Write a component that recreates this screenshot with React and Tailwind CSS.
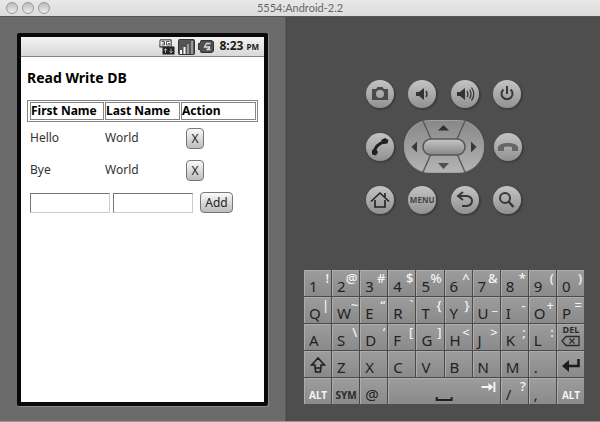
import React from "react";

const people = [
  { first: "Hello", last: "World" },
  { first: "Bye", last: "World" },
];

const keyRows = [
  [["1", "!"], ["2", "@"], ["3", "#"], ["4", "$"], ["5", "%"], ["6", "^"], ["7", "&"], ["8", "*"], ["9", "("], ["0", ")"]],
  [["Q", "|"], ["W", "~"], ["E", "“"], ["R", "`"], ["T", "{"], ["Y", "}"], ["U", "_"], ["I", "-"], ["O", "+"], ["P", "="]],
  [["A", ""], ["S", "\\"], ["D", "‘"], ["F", "["], ["G", "]"], ["H", "<"], ["J", ">"], ["K", ";"], ["L", ":"]],
];

const keyStyle =
  "flex h-[26px] min-w-0 overflow-hidden border-t border-l border-[#adadad] bg-linear-to-b from-[#9c9c9c] to-[#8a8a8a]";

function Key({ label, alt }) {
  return (
    <button type="button" className={`${keyStyle} justify-between pr-0.5 pl-1`}>
      <span className="self-end text-[15px] leading-[20px] text-[#222]">{label}</span>
      <span className="text-[13px] leading-[15px] font-medium text-[#f4f4f4]">{alt}</span>
    </button>
  );
}

function IconKey({ label, wide, children }) {
  return (
    <button
      type="button"
      aria-label={label}
      className={`${keyStyle} items-center justify-center ${wide ? "col-span-4" : ""}`}
    >
      {children}
    </button>
  );
}

function WordKey({ children, light }) {
  return (
    <button
      type="button"
      className={`${keyStyle} items-end justify-center pb-0.5 text-[10px] leading-[14px] font-bold ${light ? "text-[#f4f4f4]" : "text-[#2b2b2b]"}`}
    >
      {children}
    </button>
  );
}

function RoundButton({ label, children }) {
  return (
    <button
      type="button"
      aria-label={label}
      className="flex size-7 items-center justify-center rounded-full bg-linear-to-b from-[#c4c4c4] to-[#919191] shadow-[1px_1px_1px_1px_#3e3e3e]"
    >
      {children}
    </button>
  );
}

function Icon({ children }) {
  return (
    <svg viewBox="0 0 28 28" className="size-7" fill="none" stroke="#383838" strokeWidth="2">
      {children}
    </svg>
  );
}

function TitleBar() {
  const lights = ["Close", "Minimize", "Zoom"];
  return (
    <header className="flex h-4 items-center bg-linear-to-b from-[#e8e8e8] to-[#dcdcdc] px-1.5">
      <div className="flex flex-1 gap-1">
        {lights.map((name) => (
          <button
            key={name}
            type="button"
            aria-label={name}
            className="size-3 rounded-full border border-[#989898] bg-linear-to-b from-[#bcbcbc] to-[#ececec]"
          />
        ))}
      </div>
      <h1 className="font-['Lato','Open_Sans',sans-serif] text-[11px] leading-4 text-[#666]">5554:Android-2.2</h1>
      <div className="flex-1" />
    </header>
  );
}

function StatusBar() {
  return (
    <div className="flex h-5 items-center justify-end gap-[3px] border-b border-[#858585] bg-linear-to-b from-[#f2f2f2] to-[#d8d8d8] pr-[5px]">
      <svg viewBox="0 0 16 16" className="h-4 w-4" role="img" aria-label="3G">
        <path d="M1 .5h11.500v7H15.500v8H3.500v-7H.5z" fill="#222" />
        <path d="M1 1h11v6.500H1z" fill="#fafafa" stroke="#555" />
        <path d="M2.500 2.500H5.500v3.500H2.500M3.500 4.300h2M10.500 2.500H7.500V6h3V4.500H9" fill="none" stroke="#555" />
        <path d="M6.500 14v-4M5 11.500l1.500-2 1.500 2M12 9.500v4M10.500 12l1.500 2 1.500-2" fill="none" stroke="#aaa" />
      </svg>
      <svg viewBox="0 0 17 16" className="h-4 w-[17px]" role="img" aria-label="Signal">
        <rect x="0.500" y="0.500" width="16" height="15" rx="1" fill="#555" stroke="#333" />
        <path d="M2 11h2v4H2zM5.500 8h2v7h-2z" fill="#f6f6f6" />
        <path d="M9 5h2v10H9zM13 2h2v13h-2z" fill="#999" />
      </svg>
      <svg viewBox="0 0 16 13" className="mr-0.5 h-[13px] w-4" role="img" aria-label="Battery charging">
        <path d="M3 .5h11l1.500 1.500v9L14 12.500H3L2 9.500H.5v-6H2z" fill="#505050" stroke="#333" />
        <path d="M12.500 3.500H8.500L6.500 7H12M12 7l-3 3M8.500 9.500h4" fill="none" stroke="#ddd" strokeWidth="1.300" />
      </svg>
      <time className="text-[12px] leading-5 font-bold text-[#1a1a1a]">
        8:23 <span className="text-[8px]">PM</span>
      </time>
    </div>
  );
}

const smallButton =
  "h-[21px] rounded-[4px] border border-[#777] bg-linear-to-b from-[#fafafa] to-[#bdbdbd] text-[12px] leading-[19px] text-[#222]";
const textField = "h-5 w-20 border border-t-[#777] border-r-[#ccc] border-b-[#ccc] border-l-[#777] bg-white px-1 text-[12px]";
const headingBox = "h-[18px] border border-[#858585] leading-4 text-black";

function AppScreen() {
  return (
    <main className="flex-1 px-1.5 text-[12px] text-[#333]">
      <h2 className="mt-[11px] text-[14px] leading-5 font-bold text-black">Read Write DB</h2>
      <table className="mt-3 w-[231px] table-fixed border-separate border-spacing-0 text-left">
        <thead>
          <tr className="outline outline-[#858585] -outline-offset-1">
            <th className="h-[22px] w-[77px] p-0.5 pr-0"><div className={`${headingBox} ml-px`}>First Name</div></th>
            <th className="h-[22px] w-[76px] p-0.5 pr-0 pl-px"><div className={headingBox}>Last Name</div></th>
            <th className="h-[22px] p-0.5 pl-px"><div className={headingBox}>Action</div></th>
          </tr>
        </thead>
        <tbody>
          {people.map((person) => (
            <tr key={person.first}>
              <td className="h-8 p-0 pl-[3px]">{person.first}</td>
              <td className="h-8 p-0 pl-px">{person.last}</td>
              <td className="h-8 p-0 pl-1.5 align-middle">
                <button type="button" aria-label={`Delete ${person.first}`} className={`${smallButton} block w-[18px]`}>X</button>
              </td>
            </tr>
          ))}
        </tbody>
      </table>
      <form className="mt-1.5 flex items-center pl-[3px]" onSubmit={(e) => e.preventDefault()}>
        <input aria-label="First Name" className={textField} />
        <input aria-label="Last Name" className={`${textField} ml-[3px]`} />
        <button type="submit" className={`${smallButton} ml-[7px] w-[33px]`}>Add</button>
      </form>
    </main>
  );
}

function DirectionPad() {
  return (
    <div role="group" aria-label="Direction pad" className="flex h-[54px] w-20 items-center justify-center">
      <svg viewBox="0 0 80 54" className="h-[54px] w-20" aria-hidden="true">
        <defs>
          <linearGradient id="padFill" x1="0" y1="0" x2="0" y2="1">
            <stop offset="0" stopColor="#888" />
            <stop offset="1" stopColor="#b4b4b4" />
          </linearGradient>
          <linearGradient id="centerFill" x1="0" y1="0" x2="0" y2="1">
            <stop offset="0" stopColor="#c6c6c6" />
            <stop offset="1" stopColor="#868686" />
          </linearGradient>
        </defs>
        <rect x="0.500" y="0.500" width="79" height="52" rx="25" fill="url(#padFill)" stroke="#a2a2a2" />
        <path d="M19 1l8 18M61 1l-8 18M27 34l-8 18M53 34l8 18" stroke="#555" strokeWidth="1.300" />
        <rect x="19" y="19" width="42" height="16" rx="8" fill="url(#centerFill)" stroke="#555" strokeWidth="1.500" />
        <path d="M34 10.500L39.500 5l5.500 5.500z" fill="#303030" />
        <path d="M34 43l5.500 6 5.500-6z" fill="#505050" />
        <path d="M13 21.500v11L7.500 27z" fill="#383838" />
        <path d="M67 21.500v11l5.500-5.500z" fill="#383838" />
      </svg>
    </div>
  );
}

function Controls() {
  return (
    <section aria-label="Device controls" className="mx-auto flex w-[156px] flex-col">
      <div className="flex justify-between">
        <RoundButton label="Camera">
          <Icon>
            <path fillRule="evenodd" d="M6 9h4l1.500-2h5L18 9h4v11H6zM14 10a4 4 0 1 0 0 8 4 4 0 0 0 0-8z" fill="#4a4a4a" stroke="none" />
          </Icon>
        </RoundButton>
        <RoundButton label="Volume down">
          <Icon>
            <path d="M8 12h3l5-4v12l-5-4H8z" fill="#333" stroke="none" />
            <path d="M18 11q2 3 0 6" strokeWidth="1.500" />
          </Icon>
        </RoundButton>
        <RoundButton label="Volume up">
          <Icon>
            <path d="M6 12h3l5-4v12l-5-4H6z" fill="#333" stroke="none" />
            <path d="M16 11q2 3 0 6M18.500 9.500q3 4.500 0 9M20.500 7.500q4.500 6.500 0 13" strokeWidth="1.300" />
          </Icon>
        </RoundButton>
        <RoundButton label="Power">
          <Icon>
            <path d="M10.500 9.500a5.500 5.500 0 1 0 7 0M14 6v8" />
          </Icon>
        </RoundButton>
      </div>
      <div className="mt-3 flex items-center justify-between">
        <RoundButton label="Call">
          <Icon>
            <path d="M8.500 20Q8 12 19 8.500" strokeWidth="3" stroke="#222" />
            <path d="M15 7l4-2 3.500 2-1 3.500-4 .5zM6 17l4-1 2 3-2 3.500-4-1z" fill="#222" stroke="none" />
          </Icon>
        </RoundButton>
        <DirectionPad />
        <RoundButton label="End call">
          <Icon>
            <path d="M4 18v-4q2-4 10-4t10 4v4h-6v-4q-4-1-8 0v4z" fill="#666" stroke="none" />
          </Icon>
        </RoundButton>
      </div>
      <div className="mt-3 flex justify-between">
        <RoundButton label="Home">
          <Icon>
            <path d="M5 15.500L14 7l9 8.500M9 14v7h10v-7M19 7v4" strokeWidth="1.600" stroke="#222" />
          </Icon>
        </RoundButton>
        <RoundButton label="Menu">
          <span className="text-[8px] leading-none font-bold text-[#444]">MENU</span>
        </RoundButton>
        <RoundButton label="Back">
          <Icon>
            <path d="M12 6l-5 4 5 4M8 10h8q5 1 5 5t-5 5h-5" />
          </Icon>
        </RoundButton>
        <RoundButton label="Search">
          <Icon>
            <circle cx="12" cy="12" r="5" />
            <path d="M15.500 15.500l5 5.500" strokeWidth="2.500" />
          </Icon>
        </RoundButton>
      </div>
    </section>
  );
}

function Keyboard() {
  return (
    <section aria-label="Keyboard" className="mr-4 ml-auto grid w-[280px] grid-cols-10 gap-px bg-[#4a4a4a]">
      {keyRows.flat().map(([label, alt]) => (
        <Key key={label} label={label} alt={alt} />
      ))}
      <button type="button" className={`${keyStyle} flex-col items-center text-[9px] leading-[9px] font-bold text-[#2b2b2b]`}>
        DEL
        <svg viewBox="0 0 20 12" className="mt-px h-3 w-5" fill="none" stroke="#2b2b2b" aria-hidden="true">
          <path d="M1 6l4-4.500h13v9H5zM8.500 3.500l5 5M13.500 3.500l-5 5" strokeWidth="1.300" />
        </svg>
      </button>
      <IconKey label="Shift">
        <svg viewBox="0 0 16 18" className="h-[18px] w-4" fill="none" stroke="#202020" strokeWidth="1.600">
          <path d="M8 2L1.500 9H5v3h6V9h3.500zM5.500 12v4h5v-4" />
        </svg>
      </IconKey>
      {["Z", "X", "C", "V", "B", "N", "M", "."].map((label) => (
        <Key key={label} label={label} alt="" />
      ))}
      <IconKey label="Enter">
        <svg viewBox="0 0 20 16" className="h-4 w-5" fill="none" stroke="#1c1c1c" strokeWidth="2.500">
          <path d="M17.500 2v7H5" />
          <path d="M8 3L1 9l7 6z" fill="#1c1c1c" stroke="none" />
        </svg>
      </IconKey>
      <WordKey light>ALT</WordKey>
      <WordKey>SYM</WordKey>
      <Key label="@" alt="" />
      <IconKey label="Space" wide>
        <svg viewBox="0 0 111 26" className="h-[26px] w-full" fill="none">
          <path d="M48 18v3h15v-3" stroke="#202020" strokeWidth="2" />
          <path d="M93 8h10M106 3v10" stroke="#f2f2f2" strokeWidth="2" />
          <path d="M100 4l5 4-5 4z" fill="#f2f2f2" />
        </svg>
      </IconKey>
      <Key label="/" alt="?" />
      <Key label="," alt="" />
      <WordKey light>ALT</WordKey>
    </section>
  );
}

export default function App() {
  return (
    <div className="flex min-h-screen flex-col border-b border-[#999] bg-[#4e4e4e] font-['Noto_Sans','Open_Sans',sans-serif]">
      <TitleBar />
      <div className="flex flex-1 border-t border-[#555]">
        <div className="flex w-[286px] shrink-0 flex-col border-r border-[#5c5c5c] bg-[#6b6b6b] pt-4 pr-[17px] pb-[15px] pl-[17px]">
          <div className="flex flex-1 flex-col rounded-[2px] border-4 border-[#090909] bg-white shadow-[1px_1px_0_#8a8a8a]">
            <StatusBar />
            <AppScreen />
          </div>
        </div>
        <div className="flex flex-1 flex-col justify-between border-l border-[#474747] pt-[63px] pb-[17px]">
          <Controls />
          <Keyboard />
        </div>
      </div>
    </div>
  );
}
